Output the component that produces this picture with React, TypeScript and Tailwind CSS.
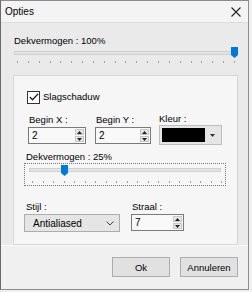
import React from "react";

const font = { fontFamily: '"Liberation Sans", Arial, sans-serif' };

function Thumb() {
  return (
    <svg width="7" height="11" viewBox="0 0 7 11">
      <path d="M0 0 H7 V8 L3.5 11 L0 8 Z" fill="#0078d7" />
    </svg>
  );
}

function Ticks({ n }: { n: number }) {
  return (
    <div className="flex justify-between">
      {Array.from({ length: n }).map((_, i) => (
        <div key={i} className="w-[1px] h-[2px] bg-[#a0a0a0]" />
      ))}
    </div>
  );
}

function Spin({ value, w }: { value: string; w: string }) {
  return (
    <div className={`${w} h-[17px] border border-[#7a7a7a] bg-[#f9f9f9] flex items-stretch`}>
      <div className="flex-1 pl-[3px] text-[10px] leading-[15px] text-black">{value}</div>
      <div className="w-[9px] flex flex-col gap-[1px] my-[1px] mr-[1px]">
        <div className="flex-1 bg-[#e6e6e6] border border-[#c8c8c8] flex items-center justify-center">
          <svg width="5" height="3" viewBox="0 0 5 3"><path d="M0 3 L2.5 0 L5 3 Z" fill="#222" /></svg>
        </div>
        <div className="flex-1 bg-[#e6e6e6] border border-[#c8c8c8] flex items-center justify-center">
          <svg width="5" height="3" viewBox="0 0 5 3"><path d="M0 0 L2.5 3 L5 0 Z" fill="#222" /></svg>
        </div>
      </div>
    </div>
  );
}

export default function App() {
  return (
    <div className="w-[252px] h-[292px] bg-[#f0f0f0] text-[9.5px] text-black" style={font}>
      <div className="w-[249px] h-[290px] border border-[#8c8c8c] border-l-[#6a6a6a] flex flex-col bg-[#f0f0f0]">
        {/* title bar */}
        <div className="h-[21px] bg-[#f4f4f4] flex items-center justify-between pl-[4px] pr-[4px]">
          <span className="text-[10px] leading-[16px] text-black">Opties</span>
          <svg width="10" height="10" viewBox="0 0 10 10" className="mr-[3px]">
            <path d="M0.5 0.5 L9.5 9.5 M9.5 0.5 L0.5 9.5" stroke="#222" strokeWidth="1.1" />
          </svg>
        </div>
        {/* upper section */}
        <div className="h-[223px] bg-[#eaeaea] border-t border-[#dcdcdc] flex flex-col pl-[12px] pr-[10px]">
          <div className="pt-[11px] pl-[1px] leading-[14px]">Dekvermogen : 100%</div>
          <div className="relative h-[26px]">
            <div className="absolute left-[1px] right-[0px] top-[3px] h-[4px] bg-[#e3e3e3] border border-[#d0d0d0]" />
            <div className="absolute left-[218px] top-[-1px]"><Thumb /></div>
            <div className="absolute left-[4px] right-[3px] top-[13px]"><Ticks n={21} /></div>
          </div>
          <div className="mt-[1px] flex-1 bg-[#f6f6f6] border border-[#d6d6d6] flex flex-col pl-[13px]">
            <div className="mt-[14px] flex items-center gap-[3px]">
              <div className="w-[13px] h-[13px] border border-[#333] bg-white flex items-center justify-center">
                <svg width="10" height="8" viewBox="0 0 10 8">
                  <path d="M0.8 4 L3.5 6.8 L9.2 0.8" stroke="#222" strokeWidth="1.3" fill="none" />
                </svg>
              </div>
              <span className="leading-[14px]">Slagschaduw</span>
            </div>
            <div className="mt-[8px] flex items-end">
              <div className="flex flex-col pl-[1px] w-[68px]">
                <span className="leading-[13px] pl-[1px]">Begin X :</span>
                <div className="mt-[1px]"><Spin value="2" w="w-[58px]" /></div>
              </div>
              <div className="flex flex-col w-[64px]">
                <span className="leading-[13px] pl-[1px]">Begin Y :</span>
                <div className="mt-[1px]"><Spin value="2" w="w-[56px]" /></div>
              </div>
              <div className="flex flex-col">
                <span className="leading-[13px]">Kleur :</span>
                <div className="w-[63px] h-[20px] bg-[#e5e5e5] border border-[#bdbdbd] flex items-stretch p-[2px] mb-[-1px]">
                  <div className="w-[43px] bg-black" />
                  <div className="flex-1 flex items-center justify-center">
                    <svg width="5" height="3" viewBox="0 0 5 3"><path d="M0 0 L2.5 3 L5 0 Z" fill="#333" /></svg>
                  </div>
                </div>
              </div>
            </div>
            <div className="mt-[6px] pl-[1px] leading-[13px] ml-[-2px]">Dekvermogen : 25%</div>
            <div className="relative ml-[-3px] w-[202px] h-[23px] border border-dotted border-[#777]">
              <div className="absolute left-[4px] right-[4px] top-[4px] h-[4px] bg-[#e3e3e3] border border-[#d0d0d0]" />
              <div className="absolute left-[36px] top-[1px]"><Thumb /></div>
              <div className="absolute left-[7px] right-[3px] top-[17px]"><Ticks n={19} /></div>
            </div>
            <div className="mt-[14px] flex ml-[-3px]">
              <div className="flex flex-col w-[107px]">
                <span className="leading-[13px] pl-[2px]">Stijl :</span>
                <div className="mt-[1px] w-[96px] h-[18px] bg-[#e5e5e5] border border-[#adadad] flex items-center justify-between pl-[8px] pr-[5px]">
                  <span className="leading-[15px] text-[10px]">Antialiased</span>
                  <svg width="8" height="5" viewBox="0 0 8 5">
                    <path d="M0.5 0.5 L4 4 L7.5 0.5" stroke="#444" strokeWidth="1" fill="none" />
                  </svg>
                </div>
              </div>
              <div className="flex flex-col">
                <span className="leading-[13px] pl-[1px]">Straal :</span>
                <div className="mt-[1px]"><Spin value="7" w="w-[53px]" /></div>
              </div>
            </div>
          </div>
        </div>
        {/* bottom */}
        <div className="flex-1 bg-[#f0f0f0] border-t border-[#fafafa] flex justify-end items-start pt-[11px] pr-[10px] gap-[10px]">
          <div className="w-[58px] h-[20px] bg-[#e1e1e1] border border-[#adadad] flex items-center justify-center leading-[15px]">Ok</div>
          <div className="w-[58px] h-[20px] bg-[#e1e1e1] border border-[#adadad] flex items-center justify-center leading-[15px]">Annuleren</div>
        </div>
      </div>
    </div>
  );
}
